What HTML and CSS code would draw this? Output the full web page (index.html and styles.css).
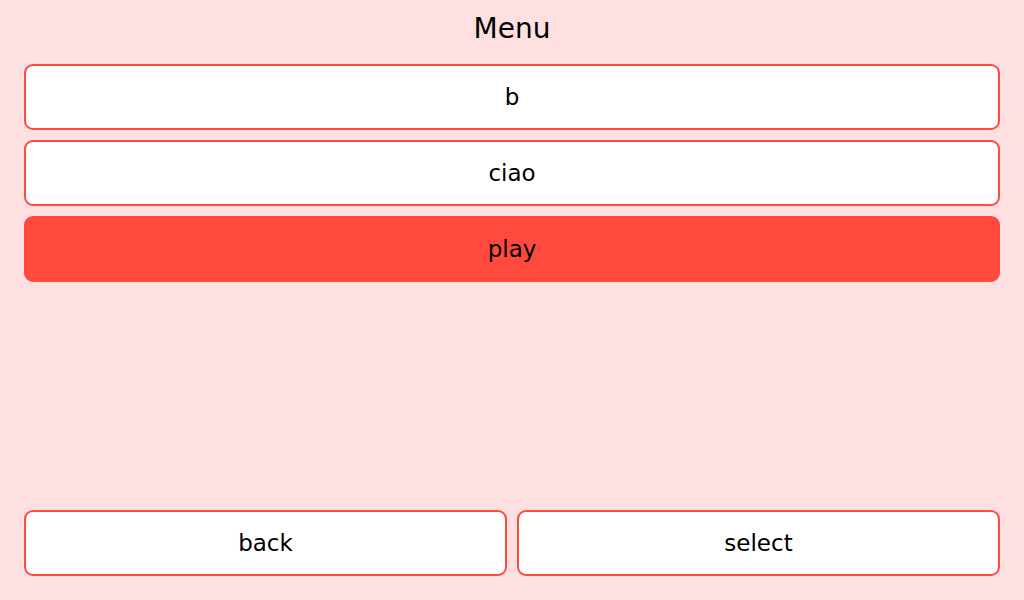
FILE: index.html
```html
<!DOCTYPE html>
<html>
<head>
<meta charset="utf-8">
<link rel="stylesheet" href="styles.css">
</head>
<body>
<div class="screen">
  <div class="title">Menu</div>
  <div class="list">
    <div class="item">b</div>
    <div class="item">ciao</div>
    <div class="item selected">play</div>
  </div>
  <div class="actions">
    <div class="item">back</div>
    <div class="item">select</div>
  </div>
</div>
</body>
</html>
```
FILE: styles.css
```css
html, body {
  margin: 0;
  padding: 0;
  background: #ffe0e0;
  font-family: "DejaVu Sans", sans-serif;
  color: #000;
}
.screen {
  box-sizing: border-box;
  height: 600px;
  padding: 0 24px 24px;
  display: flex;
  flex-direction: column;
}
.title {
  height: 64px;
  line-height: 58px;
  font-size: 28px;
  text-align: center;
}
.list {
  display: flex;
  flex-direction: column;
  gap: 10px;
  flex: 1;
}
.item {
  box-sizing: border-box;
  height: 66px;
  padding-bottom: 1px;
  border: 2px solid #ff4a3d;
  border-radius: 9px;
  background: #fff;
  display: flex;
  align-items: center;
  justify-content: center;
  font-size: 23px;
}
.item.selected {
  background: #ff4a3d;
}
.actions {
  display: flex;
  gap: 10px;
}
.actions .item {
  flex: 1;
}
```
